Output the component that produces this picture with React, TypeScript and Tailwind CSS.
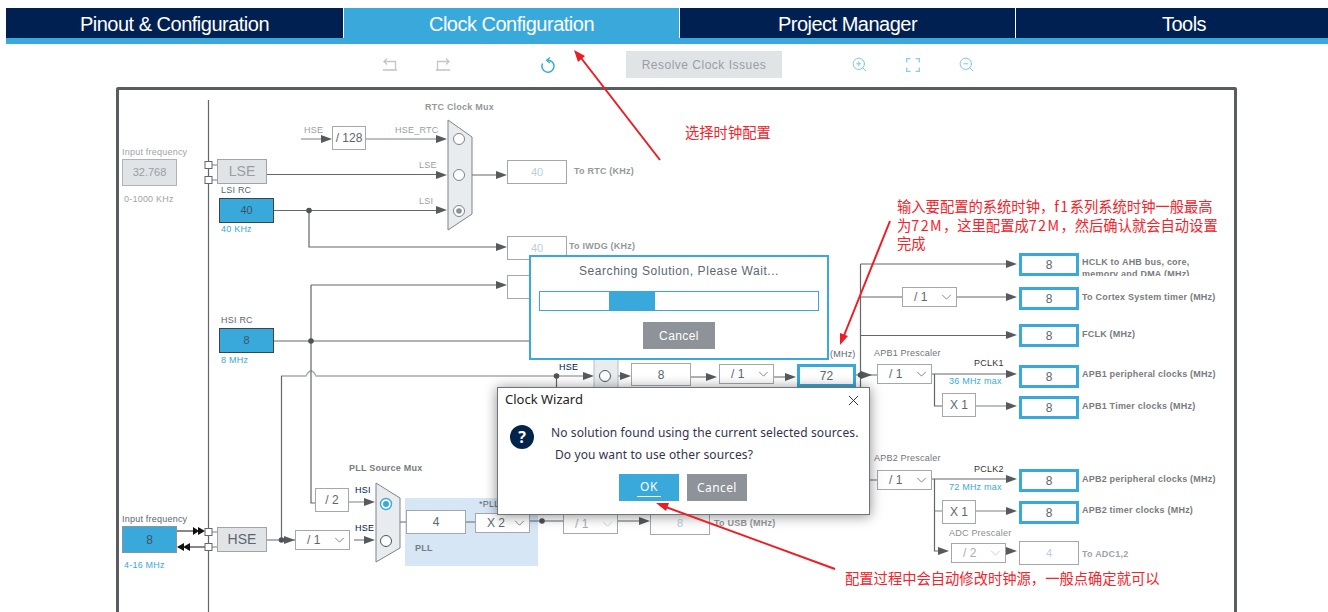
import React from "react";
import { ZoomIn, ZoomOut } from "lucide-react";

const darkWires = [
  "M208.5 100V612",
  "M267 174.5H440",
  "M274 210.5H440",
  "M472 175H500",
  "M309 210.5V247H500",
  "M311 285H500",
  "M311 285V503H315",
  "M274 341H530",
  "M281.5 376V540",
  "M267 540H295",
  "M354 540H368",
  "M400 522H406",
  "M466 522H476",
  "M530 521H563",
  "M618 521H643",
  "M556.5 376V400",
  "M618 376H624",
  "M691 377H710",
  "M773 377H790",
  "M856 375H877",
  "M860.5 264V388",
  "M860.5 264H1010",
  "M860 297H902",
  "M957 297H1010",
  "M860 335.5H1010",
  "M932 374H1010",
  "M934.5 374V406H942",
  "M863 480H877",
  "M932 479H1010",
  "M934.5 479V551H942",
  "M1006 551H1010",
];

const lightWires = [
  "M301 139H325",
  "M365 139H440",
  "M281 376H306Q311 366 316 376H587",
  "M349 502H368",
  "M934 511H942",
  "M976 406H1010",
  "M976 511H1010",
  "M212 165H217",
  "M212 180H217",
  "M212 532H217",
  "M212 547H217",
];

const arrowTips = [
  [332, 139], [447, 139], [447, 175], [447, 210], [507, 175], [507, 247], [507, 285],
  [295, 540], [375, 502], [375, 540], [594, 376], [631, 376], [717, 377], [796, 377],
  [650, 521], [872, 375], [1017, 264], [1017, 297], [1017, 335], [1017, 374], [1017, 406],
  [1017, 479], [1017, 511], [949, 551], [1017, 551],
];

const dots = [
  [309, 210.5], [311, 341], [281.5, 540], [556.5, 376], [542, 521], [860.5, 375],
];

const Tab = ({ label, className }: { label: string; className: string }) => (
  <div className={`flex shrink-0 items-center justify-center pt-[1px] text-[20px] tracking-[-0.5px] text-white ${className}`}>{label}</div>
);

const Chevron = ({ className }: { className: string }) => (
  <svg viewBox="0 0 12 7" className={`absolute right-[4px] top-[6px] h-[6px] w-[11px] ${className}`}>
    <path d="M1 1L6 6L11 1" fill="none" stroke="currentColor" />
  </svg>
);

const Select = ({ label, className, off }: { label: string; className: string; off?: boolean }) => (
  <div
    className={`absolute h-[20px] w-[55px] border border-[#a4a8ac] bg-white pl-[11px] text-[12px] leading-[19px] ${
      off ? "text-[#a9afb5]" : "text-[#5c6670]"
    } ${className}`}
  >
    {label}
    <Chevron className={off ? "text-[#c4c8cc]" : "text-[#6d747a]"} />
  </div>
);

const Box = ({ label, className }: { label: string; className: string }) => (
  <div className={`absolute flex items-center justify-center border border-[#a4a8ac] bg-white text-[12px] text-[#5c6670] ${className}`}>
    {label}
  </div>
);

const Out = ({ className }: { className: string }) => (
  <div className={`absolute flex h-[23px] w-[60px] items-center justify-center border-[3px] border-[#39a9dc] bg-white text-[12px] text-[#5c6670] ${className}`}>
    8
  </div>
);

const Pale = ({ label, className }: { label: string; className: string }) => (
  <div className={`absolute flex h-[24px] w-[60px] items-center justify-center border border-[#a4a8ac] bg-white text-[11px] text-[#b9cde3] ${className}`}>
    {label}
  </div>
);

const Src = ({ label, className }: { label: string; className: string }) => (
  <div className={`absolute flex h-[25px] w-[55px] items-center justify-center border border-[#3d4347] bg-[#39a9dc] text-[11px] text-[#3c5566] ${className}`}>
    {label}
  </div>
);

const Text = ({ children, className }: { children: React.ReactNode; className: string }) => (
  <div className={`absolute whitespace-nowrap text-[9px] leading-[12px] tracking-[0.22px] ${className}`}>{children}</div>
);

const Latin = ({ children }: { children: React.ReactNode }) => <span className="tracking-[1.4px]">{children}</span>;

const Wires = () => (
  <svg viewBox="0 0 1328 612" className="absolute left-0 top-0 h-[612px] w-[1328px]">
    <rect x="405" y="498" width="133" height="68" fill="#d6e6f5" />
    <path d={lightWires.join("")} fill="none" stroke="#a8acb0" strokeWidth="1.4" />
    <path d={darkWires.join("")} fill="none" stroke="#62676b" strokeWidth="1.2" />
    {arrowTips.map(([x, y]) => (
      <polygon key={`${x}-${y}`} points={`${x},${y} ${x - 11},${y - 4} ${x - 11},${y + 4}`} fill="#555a5e" />
    ))}
    {dots.map(([x, y]) => (
      <circle key={`${x}-${y}`} cx={x} cy={y} r="2.8" fill="#4e5357" />
    ))}

    <path d="M177 531H196M190 547H205" stroke="#111" strokeWidth="1.2" />
    <polygon points="193,527 199,531 193,535" fill="#111" />
    <polygon points="198,527 205,531 198,535" fill="#111" />
    <polygon points="177,547 184,543 184,551" fill="#111" />
    <polygon points="183,547 190,543 190,551" fill="#111" />

    <polygon points="448,120 472,137 472,214 448,230" fill="#e9ecef" stroke="#7d8388" />
    <circle cx="459" cy="139" r="5.5" fill="#fff" stroke="#7d8388" />
    <circle cx="459" cy="175" r="5.5" fill="#fff" stroke="#7d8388" />
    <circle cx="459" cy="211" r="5.5" fill="#fff" stroke="#7d8388" />
    <circle cx="459" cy="211" r="2.8" fill="#8a9096" />

    <polygon points="376,483 400,498 400,548 376,562" fill="#e9ecef" stroke="#7d8388" />
    <circle cx="386" cy="504" r="5.5" fill="#fff" stroke="#39a9dc" strokeWidth="1.4" />
    <circle cx="386" cy="504" r="3" fill="#39a9dc" />
    <circle cx="386" cy="541" r="5.5" fill="#fff" stroke="#4e5357" />

    <rect x="594" y="358" width="24" height="32" fill="#e9ecef" stroke="#b8bcc0" />
    <circle cx="605" cy="376" r="5.5" fill="#fff" stroke="#4e5357" />

    {[
      [208.5, 165], [208.5, 180], [208.5, 532], [208.5, 547],
    ].map(([x, y]) => (
      <rect key={y} x={x - 3.5} y={y - 3.5} width="7" height="7" fill="#fff" stroke="#62676b" />
    ))}
  </svg>
);

const Nodes = () => (
  <>
    <Text className="left-[122px] top-[146px] text-[#a0a4a8]">Input frequency</Text>
    <div className="absolute left-[122px] top-[159px] flex h-[27px] w-[55px] items-center justify-center border border-[#b0b4b8] bg-[#e1e4e7] text-[11px] text-[#9a9ea2]">32.768</div>
    <Text className="left-[124px] top-[193px] text-[#a0a4a8]">0-1000 KHz</Text>
    <div className="absolute left-[217px] top-[159px] flex h-[25px] w-[50px] items-center justify-center border border-[#a0a4a8] bg-[#e1e4e7] text-[14px] text-[#9a9ea2]">LSE</div>
    <Text className="left-[221px] top-[184px] text-[#5c6670]">LSI RC</Text>
    <Src label="40" className="left-[219px] top-[198px]" />
    <Text className="left-[221px] top-[223px] text-[#39a9dc]">40 KHz</Text>

    <Text className="left-[425px] top-[101px] font-bold text-[#94989c]">RTC Clock Mux</Text>
    <Text className="left-[304px] top-[124px] text-[#9a9ea2]">HSE</Text>
    <Box label="/ 128" className="left-[332px] top-[126px] h-[24px] w-[34px] text-[11px]" />
    <Text className="left-[395px] top-[124px] text-[#9a9ea2]">HSE_RTC</Text>
    <Text className="left-[419px] top-[159px] text-[#9a9ea2]">LSE</Text>
    <Text className="left-[419px] top-[195px] text-[#9a9ea2]">LSI</Text>
    <Pale label="40" className="left-[507px] top-[160px]" />
    <Text className="left-[574px] top-[165px] font-bold text-[#94989c]">To RTC (KHz)</Text>
    <Pale label="40" className="left-[507px] top-[236px]" />
    <Text className="left-[569px] top-[240px] font-bold text-[#94989c]">To IWDG (KHz)</Text>
    <Pale label="" className="left-[507px] top-[275px]" />

    <Text className="left-[221px] top-[314px] text-[#5c6670]">HSI RC</Text>
    <Src label="8" className="left-[219px] top-[328px]" />
    <Text className="left-[221px] top-[354px] text-[#39a9dc]">8 MHz</Text>

    <Text className="left-[122px] top-[513px] text-[#5c6670]">Input frequency</Text>
    <div className="absolute left-[122px] top-[526px] flex h-[27px] w-[55px] items-center justify-center border border-[#8d9399] bg-[#39a9dc] text-[12px] text-[#3c5566]">8</div>
    <Text className="left-[124px] top-[559px] text-[#39a9dc]">4-16 MHz</Text>
    <div className="absolute left-[217px] top-[527px] flex h-[25px] w-[50px] items-center justify-center border border-[#a0a4a8] bg-[#e1e4e7] text-[14px] text-[#5c6670]">HSE</div>
    <Select label="/ 1" className="left-[295px] top-[530px]" />
    <Box label="/ 2" className="left-[315px] top-[488px] h-[24px] w-[34px]" />
    <Text className="left-[349px] top-[462px] font-bold text-[#777c80]">PLL Source Mux</Text>
    <Text className="left-[355px] top-[484px] text-[#002052]">HSI</Text>
    <Text className="left-[355px] top-[522px] text-[#002052]">HSE</Text>

    <Box label="4" className="left-[406px] top-[510px] h-[24px] w-[60px]" />
    <Select label="X 2" className="left-[475px] top-[513px] pl-[9px]" />
    <Text className="left-[479px] top-[498px] text-[#5c6670]">*PLLMul</Text>
    <Text className="left-[415px] top-[542px] font-bold text-[#777c80]">PLL</Text>
    <Select label="/ 1" off className="left-[563px] top-[514px]" />
    <Pale label="8" className="left-[650px] top-[511px]" />
    <Text className="left-[714px] top-[517px] font-bold text-[#94989c]">To USB (MHz)</Text>

    <Text className="left-[559px] top-[361px] text-[#002052]">HSE</Text>
    <Box label="8" className="left-[631px] top-[363px] h-[23px] w-[60px]" />
    <Select label="/ 1" className="left-[719px] top-[364px]" />
    <div className="absolute left-[797px] top-[364px] flex h-[23px] w-[59px] items-center justify-center border-[3px] border-[#39a9dc] bg-white text-[12px] text-[#5c6670]">72</div>
    <Text className="left-[830px] top-[348px] text-[#5c6670]">(MHz)</Text>

    <Out className="left-[1019px] top-[253px]" />
    <Text className="left-[1082px] top-[256px] h-[20px] overflow-hidden font-bold text-[#777c80]">
      HCLK to AHB bus, core,
      <br />
      memory and DMA (MHz)
    </Text>
    <Select label="/ 1" className="left-[902px] top-[287px]" />
    <Out className="left-[1019px] top-[287px]" />
    <Text className="left-[1082px] top-[291px] font-bold text-[#777c80]">To Cortex System timer (MHz)</Text>
    <Out className="left-[1019px] top-[324px]" />
    <Text className="left-[1082px] top-[328px] font-bold text-[#777c80]">FCLK (MHz)</Text>

    <Text className="left-[874px] top-[347px] text-[#6d747a]">APB1 Prescaler</Text>
    <Select label="/ 1" className="left-[877px] top-[364px]" />
    <Text className="left-[974px] top-[357px] text-[#333]">PCLK1</Text>
    <Text className="left-[949px] top-[375px] text-[#39a9dc]">36 MHz max</Text>
    <Out className="left-[1019px] top-[365px]" />
    <Text className="left-[1082px] top-[368px] font-bold text-[#777c80]">APB1 peripheral clocks (MHz)</Text>
    <Box label="X 1" className="left-[942px] top-[393px] h-[24px] w-[34px]" />
    <Out className="left-[1019px] top-[396px]" />
    <Text className="left-[1082px] top-[400px] font-bold text-[#777c80]">APB1 Timer clocks (MHz)</Text>

    <Text className="left-[874px] top-[452px] text-[#6d747a]">APB2 Prescaler</Text>
    <Select label="/ 1" className="left-[877px] top-[470px]" />
    <Text className="left-[974px] top-[463px] text-[#333]">PCLK2</Text>
    <Text className="left-[949px] top-[481px] text-[#39a9dc]">72 MHz max</Text>
    <Out className="left-[1019px] top-[469px]" />
    <Text className="left-[1082px] top-[473px] font-bold text-[#777c80]">APB2 peripheral clocks (MHz)</Text>
    <Box label="X 1" className="left-[942px] top-[500px] h-[24px] w-[34px]" />
    <Out className="left-[1019px] top-[501px]" />
    <Text className="left-[1082px] top-[504px] font-bold text-[#777c80]">APB2 timer clocks (MHz)</Text>
    <Text className="left-[949px] top-[527px] text-[#8a8e92]">ADC Prescaler</Text>
    <Select label="/ 2" off className="left-[951px] top-[543px]" />
    <Pale label="4" className="left-[1019px] top-[541px]" />
    <Text className="left-[1082px] top-[548px] font-bold text-[#a0a4a8]">To ADC1,2</Text>
  </>
);

const SearchDialog = () => (
  <div className="absolute left-[529px] top-[255px] flex h-[105px] w-[300px] flex-col border-[2px] border-[#39a9dc] bg-white px-[8px]">
    <div className="mt-[7px] text-center text-[12px] leading-[14px] tracking-[0.56px] text-[#5c6670]">Searching Solution, Please Wait...</div>
    <div className="mt-[13px] h-[20px] border border-[#39a9dc] pl-[69px]">
      <div className="h-full w-[46px] bg-[#39a9dc]" />
    </div>
    <button className="mx-auto mt-[11px] h-[27px] w-[72px] bg-[#8d9399] text-[12px] tracking-[0.4px] text-white">Cancel</button>
  </div>
);

const WizardDialog = () => (
  <div className="absolute left-[497px] top-[387px] h-[128px] w-[373px] border border-[#6d747a] bg-white shadow-[0_1px_12px_rgba(0,0,0,0.45)] font-['Noto_Sans','Noto_Sans_CJK_SC',sans-serif] text-[#33334d]">
    <div className="flex h-[24px] items-center justify-between pl-[7px] pr-[10px]">
      <span className="text-[13px] text-[#222]">Clock Wizard</span>
      <svg viewBox="0 0 12 12" className="h-[11px] w-[11px]">
        <path d="M1 1L11 11M11 1L1 11" stroke="#222" strokeWidth="1" />
      </svg>
    </div>
    <div className="flex pl-[12px] pt-[13px]">
      <div className="flex h-[24px] w-[24px] items-center justify-center rounded-full bg-[#03234b] text-[16px] font-bold text-white">?</div>
      <div className="ml-[17px] whitespace-nowrap text-[12px] leading-[22px] tracking-[0.11px]">
        <div className="-mt-[3px]">No solution found using the current selected sources.</div>
        <div className="pl-[4px]">Do you want to use other sources?</div>
      </div>
    </div>
    <div className="mt-[8px] flex justify-center gap-[8px] pr-[1px]">
      <button className="flex h-[27px] w-[60px] items-center justify-center bg-[#39a9dc] text-[12px] text-white">
        <span className="border-b border-white px-[3px] tracking-[0.5px]">OK</span>
      </button>
      <button className="h-[27px] w-[60px] bg-[#8d9399] text-[12px] tracking-[0.4px] text-white">Cancel</button>
    </div>
  </div>
);

const Notes = () => (
  <>
    <svg viewBox="0 0 1328 612" className="absolute left-0 top-0 h-[612px] w-[1328px]">
      <path d="M660 160L578 54M890 221L843 338M835 569L663 506" stroke="#ee1c25" strokeWidth="2" fill="none" />
      <polygon points="574,50 585,56 578,62" fill="#ee1c25" />
      <polygon points="840,345 840,333 848,336" fill="#ee1c25" />
      <polygon points="656,503 669,503 666,511" fill="#ee1c25" />
    </svg>
    <div className="absolute left-[685px] top-[122px] whitespace-nowrap font-['Noto_Sans_CJK_SC',sans-serif] text-[14.3px] leading-[20px] text-[#f5222a]">选择时钟配置</div>
    <div className="absolute left-[897px] top-[197px] w-[330px] font-['Noto_Sans_CJK_SC',sans-serif] text-[14.3px] leading-[18.5px] text-[#f5222a]">
      输入要配置的系统时钟，<Latin>f1</Latin>系列系统时钟一般最高
      <br />
      为<Latin>72M</Latin>，这里配置成<Latin>72M</Latin>，然后确认就会自动设置
      <br />
      完成
    </div>
    <div className="absolute left-[845px] top-[568px] whitespace-nowrap font-['Noto_Sans_CJK_SC',sans-serif] text-[14.3px] leading-[20px] text-[#f5222a]">配置过程中会自动修改时钟源，一般点确定就可以</div>
  </>
);

const App = () => {
  return (
    <div className="relative h-[612px] w-[1328px] overflow-hidden bg-white pt-2 font-['Liberation_Sans','Noto_Sans_CJK_SC',sans-serif]">
      <div className="ml-[6px] flex h-[36px] overflow-hidden border-b-[6px] border-[#39a9dc] bg-[#002052]">
        <Tab label="Pinout & Configuration" className="w-[338px] border-r border-white" />
        <Tab label="Clock Configuration" className="w-[336px] border-r border-white bg-[#39a9dc]" />
        <Tab label="Project Manager" className="w-[336px] border-r border-white" />
        <Tab label="Tools" className="w-[336px]" />
      </div>

      <div className="flex h-[43px] items-center pb-[2px]">
        <svg viewBox="0 0 14 13" className="ml-[383px] h-[13px] w-[14px]" fill="none" stroke="#c4c7ca" strokeWidth="1.3">
          <path d="M4 0.5L1 3.5L4 6.5M1 3.5H12.5V12" />
          <path d="M0 12H14" strokeWidth="1.6" />
        </svg>
        <svg viewBox="0 0 14 13" className="ml-[39px] h-[13px] w-[14px]" fill="none" stroke="#c4c7ca" strokeWidth="1.3">
          <path d="M10 0.5L13 3.5L10 6.5M13 3.5H1.5V12" />
          <path d="M0 12H14" strokeWidth="1.6" />
        </svg>
        <svg viewBox="0 0 16 16" className="ml-[90px] h-[16px] w-[16px]" fill="none" stroke="#39a9dc" strokeWidth="1.5">
          <path d="M8 3.2A6 6 0 1 1 2.6 6.5" />
          <path d="M10 0.5L6.6 3.2L10 6" strokeWidth="1.3" />
        </svg>
        <button className="ml-[70px] h-[27px] w-[156px] bg-[#e1e4e7] text-[12px] tracking-[0.5px] text-[#9a9ea2]">Resolve Clock Issues</button>
        <ZoomIn size={17} strokeWidth={1.4} className="ml-[69px] text-[#7cc4e8]" />
        <svg viewBox="0 0 14 14" className="ml-[38px] h-[14px] w-[14px]" fill="none" stroke="#8ccbea" strokeWidth="1.3">
          <path d="M0.7 4.5V0.7H4.5M9.5 0.7H13.3V4.5M13.3 9.5V13.3H9.5M4.5 13.3H0.7V9.5" />
        </svg>
        <ZoomOut size={17} strokeWidth={1.4} className="ml-[38px] text-[#7cc4e8]" />
      </div>

      <div className="relative ml-[116px] h-[560px] w-[1121px] rounded-t-[2px] border-[3px] border-[#5a5d60]">
        {/* canvas shares the page origin so diagram coordinates read straight off the screenshot */}
        <div className="absolute left-[-119px] top-[-90px] h-[612px] w-[1328px]">
          <Wires />
          <Nodes />
          <SearchDialog />
          <WizardDialog />
          <Notes />
        </div>
      </div>
    </div>
  );
};

export default App;
